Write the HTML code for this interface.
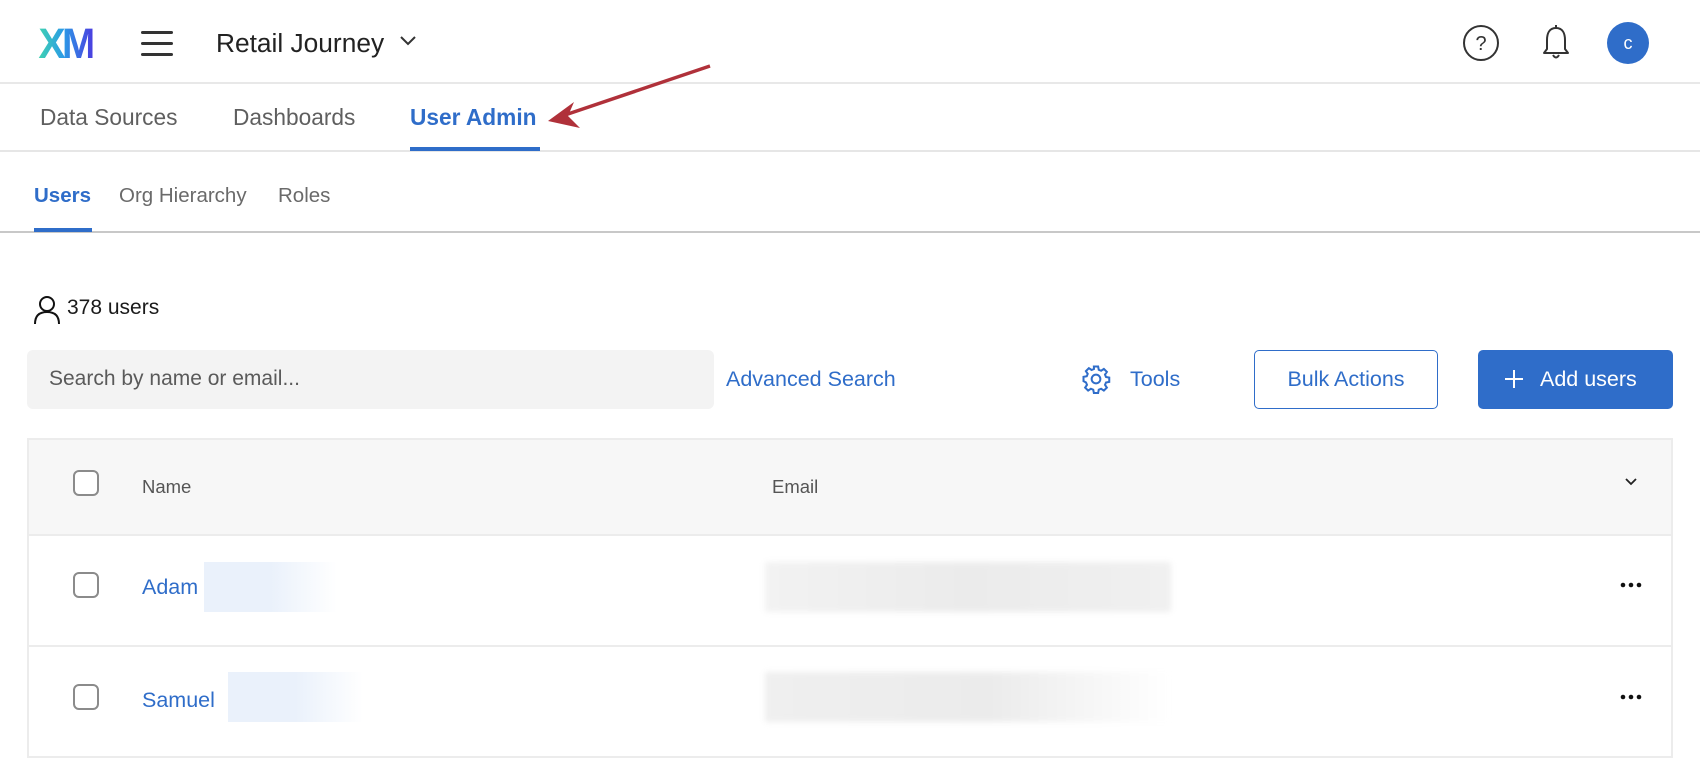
<!DOCTYPE html>
<html><head><meta charset="utf-8"><style>
*{margin:0;padding:0;box-sizing:border-box}
body{width:1700px;height:760px;overflow:hidden;background:#fff;font-family:"Liberation Sans",sans-serif;position:relative;color:#1a1a1a}
.a{position:absolute}
.tab{position:absolute;top:104px;font-size:22.7px;color:#5f5f5f;line-height:26px}
.sub{position:absolute;top:184px;font-size:20.5px;color:#6a6a6a;line-height:24px}
.cb{position:absolute;left:73px;width:26px;height:26px;border:2px solid #8b8b8b;border-radius:6px;background:#fff}
</style></head><body>
<div class="a" style="left:37px;top:22px;font-size:43px;font-weight:bold;letter-spacing:-4px;line-height:44px;background:linear-gradient(90deg,#3fd3b0,#2b9ce6 45%,#4a3fe0);-webkit-background-clip:text;background-clip:text;color:transparent;transform:scaleX(0.95)">XM</div>
<div class="a" style="left:141px;top:31px;width:32px;height:3px;background:#333;border-radius:2px"></div>
<div class="a" style="left:141px;top:42px;width:32px;height:3px;background:#333;border-radius:2px"></div>
<div class="a" style="left:141px;top:53px;width:32px;height:3px;background:#333;border-radius:2px"></div>
<div class="a" style="left:216px;top:28px;font-size:26.3px;color:#222;line-height:30px">Retail Journey</div>
<svg class="a" style="left:398px;top:34px" width="20" height="14"><path d="M3 3 L10 10 L17 3" fill="none" stroke="#333" stroke-width="2"/></svg>
<svg class="a" style="left:1462px;top:24px" width="38" height="38"><circle cx="19" cy="19" r="17" fill="none" stroke="#333" stroke-width="2"/><text x="19" y="26" text-anchor="middle" font-size="20" font-family="Liberation Sans" fill="#333">?</text></svg>
<svg class="a" style="left:1540px;top:24px" width="32" height="38"><path d="M16 4 C9 4 7 10 7 16 L7 25 L4 29 L28 29 L25 25 L25 16 C25 10 23 4 16 4 Z" fill="none" stroke="#333" stroke-width="2" stroke-linejoin="round"/><path d="M13 31 Q16 36 19 31" fill="none" stroke="#333" stroke-width="2"/><line x1="16" y1="1" x2="16" y2="4" stroke="#333" stroke-width="2"/></svg>
<div class="a" style="left:1607px;top:22px;width:42px;height:42px;border-radius:50%;background:#2f6dc9;color:#fff;font-size:18px;text-align:center;line-height:42px">c</div>
<div class="a" style="left:0;top:82px;width:1700px;height:2px;background:#e8e8e8"></div>
<div class="tab" style="left:40px">Data Sources</div>
<div class="tab" style="left:233px">Dashboards</div>
<div class="tab" style="left:410px;color:#2f6dc9;font-weight:bold">User Admin</div>
<div class="a" style="left:0;top:150px;width:1700px;height:2px;background:#e6e6e6"></div>
<div class="a" style="left:410px;top:147px;width:130px;height:4px;background:#2f6dc9"></div>
<svg class="a" style="left:540px;top:58px" width="180" height="72"><line x1="170" y1="8" x2="22" y2="58" stroke="#b0313a" stroke-width="3.5"/><path d="M8 63 L34 44 L28 58 L40 70 Z" fill="#b0313a"/></svg>
<div class="sub" style="left:34px;color:#2f6dc9;font-weight:bold">Users</div>
<div class="sub" style="left:119px">Org Hierarchy</div>
<div class="sub" style="left:278px">Roles</div>
<div class="a" style="left:0;top:231px;width:1700px;height:2px;background:#c8c8c8"></div>
<div class="a" style="left:34px;top:228px;width:58px;height:4px;background:#2f6dc9"></div>
<svg class="a" style="left:32px;top:294px" width="30" height="32"><circle cx="15" cy="10" r="7" fill="none" stroke="#111" stroke-width="2"/><path d="M3 30 C3 21 8 18 15 18 C22 18 27 21 27 30" fill="none" stroke="#111" stroke-width="2"/></svg>
<div class="a" style="left:67px;top:296px;font-size:21px;line-height:24px">378 users</div>
<div class="a" style="left:27px;top:350px;width:687px;height:59px;background:#f3f3f3;border-radius:6px"></div>
<div class="a" style="left:49px;top:367px;font-size:21px;color:#5a5a5a;line-height:24px">Search by name or email...</div>
<div class="a" style="left:726px;top:367px;font-size:21.5px;color:#2f6dc9;line-height:24px">Advanced Search</div>
<svg class="a" style="left:1081px;top:364px" width="30" height="30" viewBox="0 0 24 24"><path fill="none" stroke="#2f6dc9" stroke-width="1.6" d="M10.3 2h3.4l.5 2.6 1.9.8 2.2-1.5 2.4 2.4-1.5 2.2.8 1.9 2.6.5v3.4l-2.6.5-.8 1.9 1.5 2.2-2.4 2.4-2.2-1.5-1.9.8-.5 2.6h-3.4l-.5-2.6-1.9-.8-2.2 1.5-2.4-2.4 1.5-2.2-.8-1.9L2 13.7v-3.4l2.6-.5.8-1.9-1.5-2.2 2.4-2.4 2.2 1.5 1.9-.8z"/><circle cx="12" cy="12" r="3.5" fill="none" stroke="#2f6dc9" stroke-width="1.6"/></svg>
<div class="a" style="left:1130px;top:367px;font-size:21.5px;color:#2f6dc9;line-height:24px">Tools</div>
<div class="a" style="left:1254px;top:350px;width:184px;height:59px;border:1.5px solid #2f6dc9;border-radius:5px;color:#2f6dc9;font-size:21.5px;text-align:center;line-height:56px">Bulk Actions</div>
<div class="a" style="left:1478px;top:350px;width:195px;height:59px;background:#2f6dc9;border-radius:5px;color:#fff;font-size:21.5px;line-height:59px;padding-left:62px">Add users</div>
<svg class="a" style="left:1504px;top:369px" width="20" height="20"><path d="M10 1V19M1 10H19" stroke="#fff" stroke-width="2"/></svg>
<div class="a" style="left:27px;top:438px;width:1646px;height:320px;border:2px solid #ececec;border-bottom:none"></div>
<div class="a" style="left:29px;top:440px;width:1642px;height:96px;background:#f7f7f7;border-bottom:2px solid #ececec"></div>
<div class="a" style="left:29px;top:645px;width:1642px;height:2px;background:#ececec"></div>
<div class="a" style="left:29px;top:756px;width:1642px;height:2px;background:#ececec"></div>
<div class="cb" style="top:470px"></div>
<div class="cb" style="top:572px"></div>
<div class="cb" style="top:684px"></div>
<div class="a" style="left:142px;top:476px;font-size:18.5px;color:#555;line-height:22px">Name</div>
<div class="a" style="left:772px;top:476px;font-size:18.5px;color:#555;line-height:22px">Email</div>
<svg class="a" style="left:1624px;top:477px" width="14" height="10"><path d="M2 2L7 7L12 2" fill="none" stroke="#222" stroke-width="1.8"/></svg>
<div class="a" style="left:142px;top:575px;font-size:21.5px;color:#2f6dc9;line-height:24px">Adam</div>
<div class="a" style="left:204px;top:562px;width:133px;height:50px;background:linear-gradient(90deg,#eaf1fb 50%,#fff)"></div>
<div class="a" style="left:142px;top:688px;font-size:21.5px;color:#2f6dc9;line-height:24px">Samuel</div>
<div class="a" style="left:228px;top:672px;width:135px;height:50px;background:linear-gradient(90deg,#eaf1fb 50%,#fff)"></div>
<div class="a" style="left:765px;top:562px;width:406px;height:50px;background:linear-gradient(90deg,#f2f2f2,#ebebeb 50%,#f0f0f0);filter:blur(3px)"></div>
<div class="a" style="left:765px;top:672px;width:406px;height:50px;background:linear-gradient(90deg,#efefef,#ebebeb 55%,#fff);filter:blur(3px)"></div>
<svg class="a" style="left:1620px;top:581px" width="22" height="8"><circle cx="3" cy="4" r="2.3" fill="#111"/><circle cx="11" cy="4" r="2.3" fill="#111"/><circle cx="19" cy="4" r="2.3" fill="#111"/></svg>
<svg class="a" style="left:1620px;top:693px" width="22" height="8"><circle cx="3" cy="4" r="2.3" fill="#111"/><circle cx="11" cy="4" r="2.3" fill="#111"/><circle cx="19" cy="4" r="2.3" fill="#111"/></svg>
</body></html>
